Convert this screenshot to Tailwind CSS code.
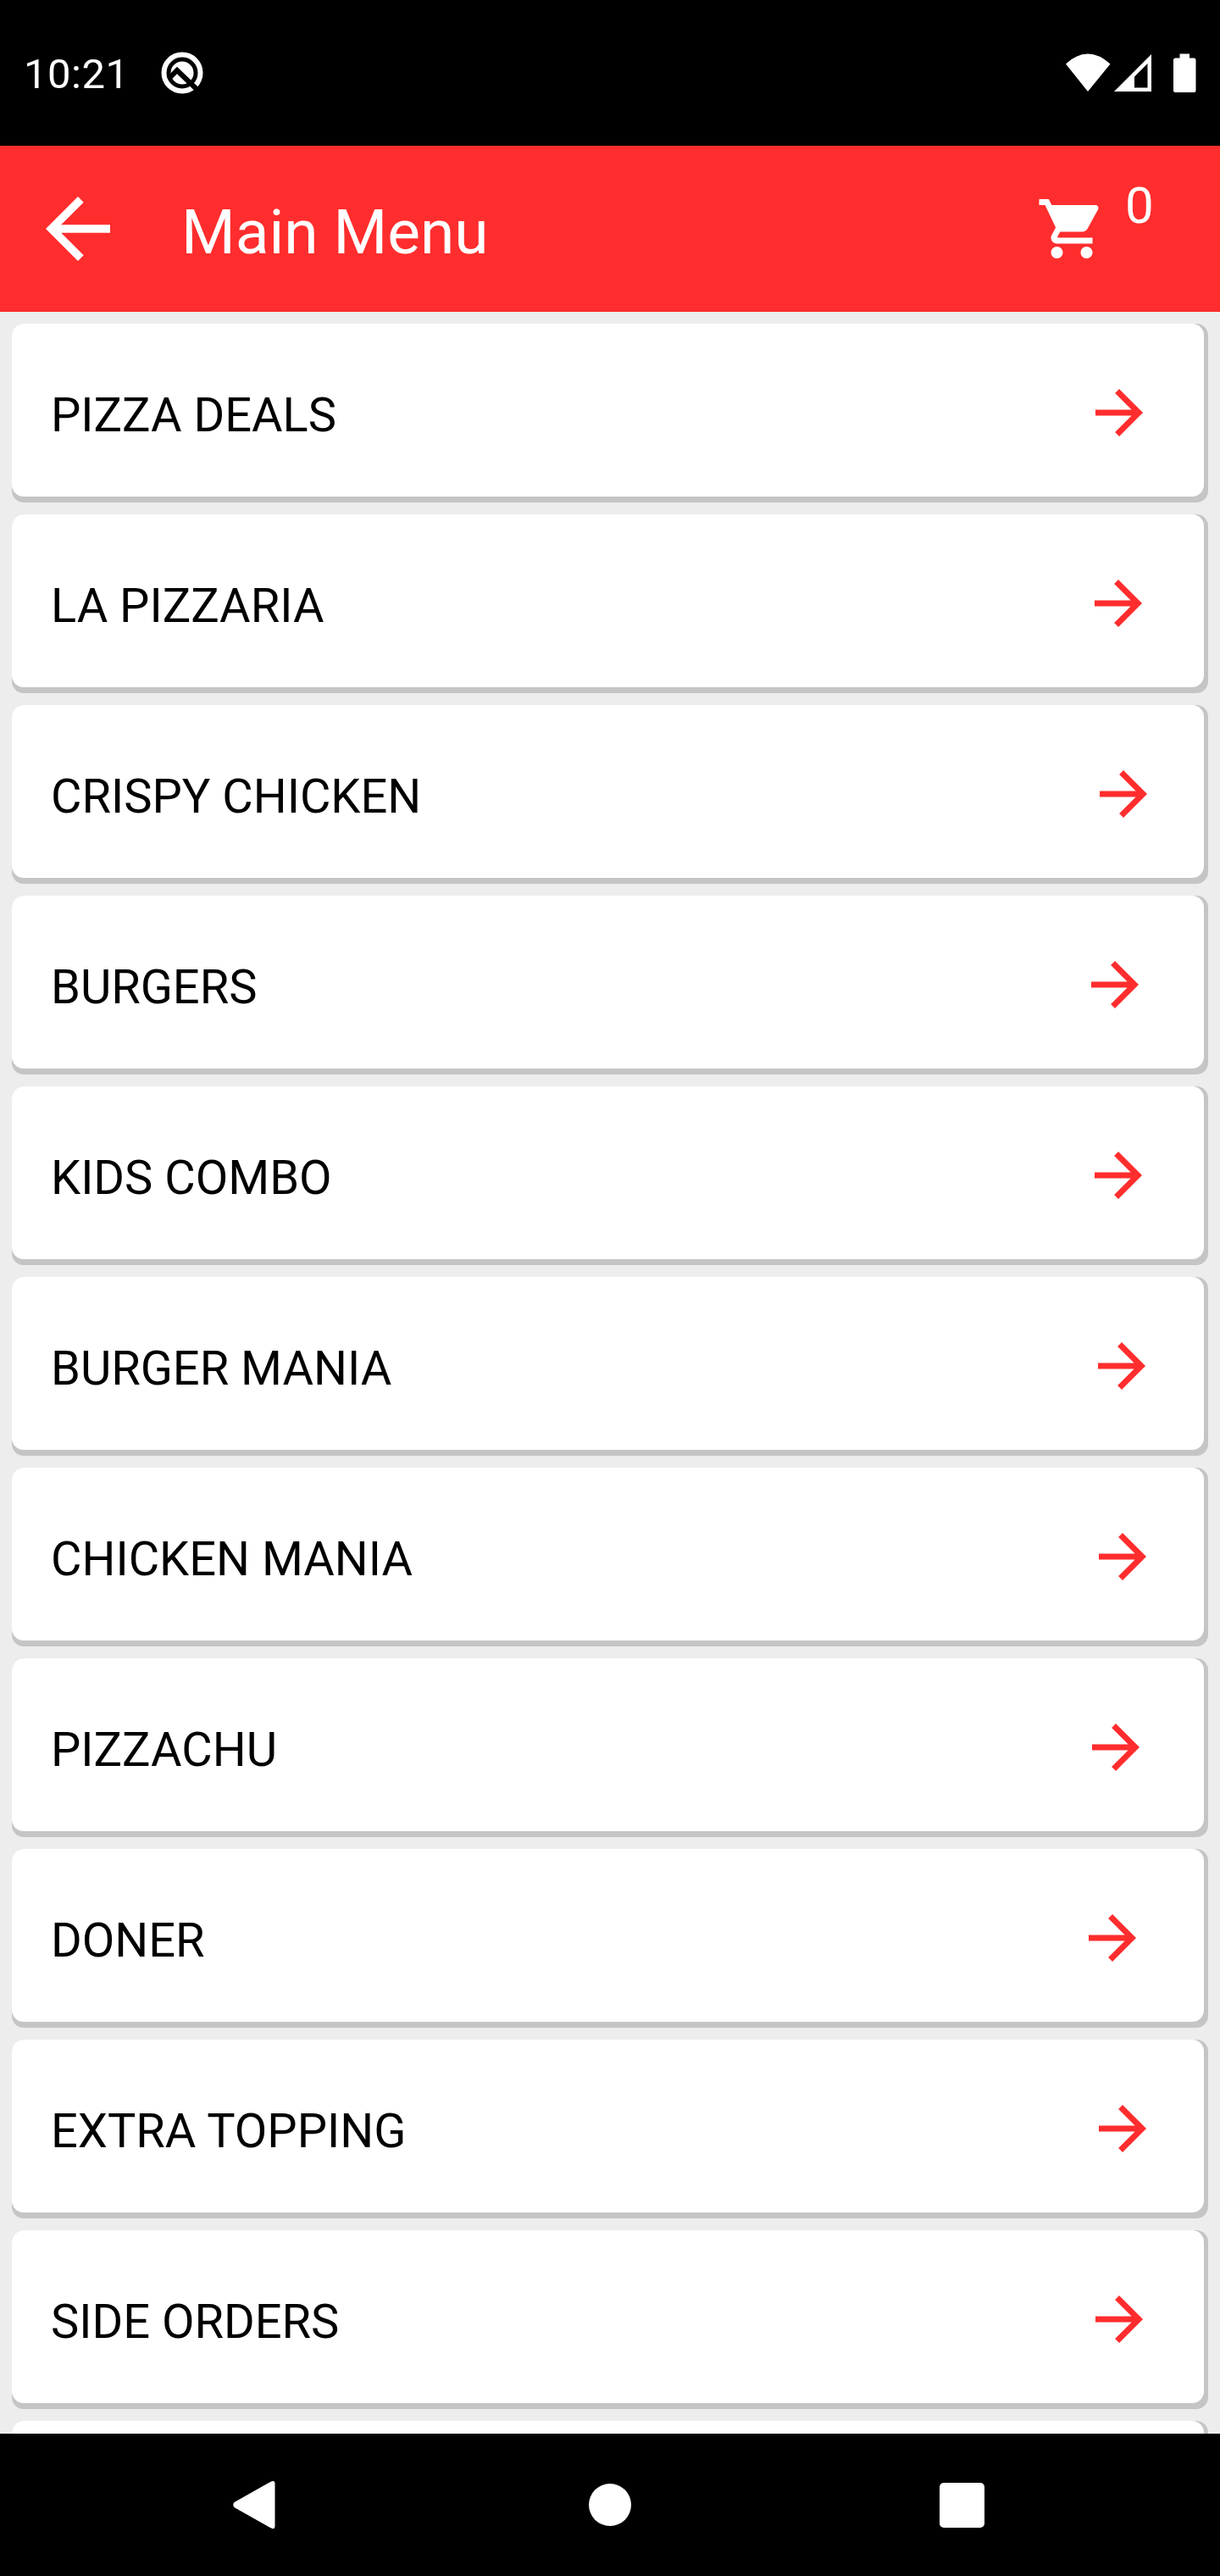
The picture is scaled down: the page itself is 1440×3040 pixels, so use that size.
<!DOCTYPE html>
<html lang="en">

<head>
  <meta charset="UTF-8" />
  <meta name="viewport" content="width=device-width, initial-scale=1.0" />
  <title>Main Menu</title>
  <script src="https://cdn.jsdelivr.net/npm/@tailwindcss/browser@4"></script>
</head>

<body class="bg-[#ededed] font-['Roboto',sans-serif] h-[3040px] flex flex-col overflow-hidden">
  <!-- Status bar -->
  <div class="bg-black text-white h-[172px] shrink-0 flex items-center justify-between px-[28px]">
    <div class="flex items-center">
      <span class="w-[162px] text-[49px] leading-[60px] tracking-[0.5px] pt-[4px]">10:21</span>
      <svg class="w-[50px] h-[50px]" viewBox="0 0 50 50">
        <circle cx="25" cy="25" r="21.500" fill="none" stroke="#fff" stroke-width="6" />
        <circle cx="25" cy="25" r="13.500" fill="#fff" />
        <path d="M9 32L19 22L45 47" fill="none" stroke="#000" stroke-width="6" />
      </svg>
    </div>
    <svg class="w-[156px] h-[48px]" viewBox="0 0 156 48" fill="#fff">
      <path d="M2 13.500Q28 -10.500 54.500 13.500L28 46Z" />
      <path fill-rule="evenodd" d="M59 46L103 2V46ZM83 41.500H98.500V13L83 28.500Z" />
      <path d="M136.500 1.500H148V6.500H153Q155.500 6.500 155.500 9V44.500Q155.500 47 153 47H131.500Q129 47 129 44.500V9Q129 6.500 131.500 6.500H136.500Z" />
    </svg>
  </div>

  <!-- Header -->
  <header class="bg-[#ff2d2d] text-white h-[196px] shrink-0 flex items-center">
    <svg class="w-[114px] h-[114px] ml-[35px]" viewBox="0 0 24 24" fill="#fff">
      <path d="M20 11H7.830l5.590-5.590L12 4l-8 8 8 8 1.410-1.410L7.830 13H20v-2z" />
    </svg>
    <h1 class="ml-[65px] text-[73px] leading-[84px] pt-[8px]">Main Menu</h1>
    <svg class="w-[84px] h-[84px] ml-auto" viewBox="0 0 24 24" fill="#fff">
      <path d="M7 18c-1.100 0-1.990.9-1.990 2S5.900 22 7 22s2-.9 2-2-.9-2-2-2zM1 2v2h2l3.600 7.590-1.350 2.450c-.16.28-.25.61-.25.96 0 1.100.9 2 2 2h12v-2H7.420c-.14 0-.25-.11-.25-.25l.03-.12.9-1.630h7.450c.75 0 1.410-.41 1.750-1.030l3.580-6.490c.08-.14.12-.31.12-.48 0-.55-.45-1-1-1H5.210l-.94-2H1zm16 16c-1.100 0-1.990.9-1.990 2s.89 2 1.990 2 2-.9 2-2-.9-2-2-2z" />
    </svg>
    <span class="ml-[21px] w-[112px] text-[60px] leading-[70px] mb-[54px]">0</span>
  </header>

  <main id="menu" class="flex-1 min-h-0 overflow-hidden flex flex-col gap-[14px] p-[14px]"></main>

  <!-- Navigation bar -->
  <nav class="bg-black h-[168px] shrink-0 grid grid-cols-[300px_840px_300px]">
    <svg class="w-[52px] h-[60px] justify-self-end self-center mr-[-27px]" viewBox="0 0 52 60" fill="#fff">
      <path d="M1.500 27L44 3Q49.500 0 49.500 5V55Q49.500 60 44 57L1.500 33Q-1 30 1.500 27Z" />
    </svg>
    <div class="w-[50px] h-[50px] rounded-full bg-white place-self-center"></div>
    <div class="w-[53px] h-[53px] rounded-[5px] bg-white self-center ml-[-31px]"></div>
  </nav>

  <script>
    // name and space to the right of the arrow
    const categories = [
      ['PIZZA DEALS', 58],
      ['LA PIZZARIA', 59],
      ['CRISPY CHICKEN', 53.5],
      ['BURGERS', 63],
      ['KIDS COMBO', 59],
      ['BURGER MANIA', 55],
      ['CHICKEN MANIA', 54],
      ['PIZZACHU', 62],
      ['DONER', 66],
      ['EXTRA TOPPING', 54],
      ['SIDE ORDERS', 58],
      ['', 58]
    ];

    // the grey wrapper shows as a hard edge on the right and bottom of each card
    document.getElementById('menu').innerHTML = categories.map(([name, space]) => `
      <div class="shrink-0 rounded-[14px] bg-[#c5c5c5] pr-[5px] pb-[7px] mr-0">
        <a class="h-[204px] flex items-center justify-between rounded-[14px] bg-white pl-[46px] text-black">
          <span class="text-[56px] leading-[66px] pt-[12px]">${name}</span>
          <svg class="w-[84px] h-[84px] mt-[5px]" style="margin-right: ${space}px" viewBox="0 0 24 24" fill="#ff2d2d">
            <path d="M12 4l-1.410 1.410L16.170 11H4v2h12.170l-5.580 5.590L12 20l8-8z" />
          </svg>
        </a>
      </div>
    `).join('');
  </script>
</body>

</html>
